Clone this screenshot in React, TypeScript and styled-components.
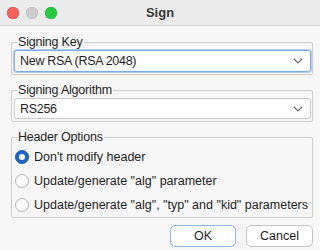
import React from "react";
import styled, { createGlobalStyle } from "styled-components";

const Global = createGlobalStyle`
  html, body { margin: 0; padding: 0; background: #f6f6f6; }
  body { font-family: "Liberation Sans", Arial, sans-serif; }
`;

const Window = styled.div`
  width: 320px;
  height: 250px;
  background: #f7f7f7;
  display: flex;
  flex-direction: column;
  overflow: hidden;
  color: #1d1d1d;
  font-size: 12px;
  letter-spacing: -0.2px;
`;

const TitleBar = styled.div`
  height: 25px;
  flex: none;
  background: #ececec;
  border-bottom: 1px solid #d4d4d4;
  display: grid;
  grid-template-columns: 1fr auto 1fr;
  align-items: center;
  padding: 0 7px;
`;

const Lights = styled.div`
  display: flex;
  gap: 7px;
`;

const Light = styled.span<{ $c: string; $b: string }>`
  width: 12px;
  height: 12px;
  border-radius: 50%;
  background: ${(p) => p.$c};
  box-shadow: inset 0 0 0 0.5px ${(p) => p.$b};
`;

const Title = styled.div`
  font-weight: bold;
  font-size: 13px;
  letter-spacing: 0;
  color: #3a3a3a;
`;

const Body = styled.div`
  display: flex;
  flex-direction: column;
  gap: 7px;
  padding: 8px 7px 0 11px;
`;

const Group = styled.fieldset<{ $pb?: number }>`
  margin: 0;
  padding: 0 1px ${(p) => p.$pb ?? 2}px 2px;
  border: 1px solid #cdcdcd;
  border-radius: 2px;
  min-width: 0;
`;

const Legend = styled.legend`
  padding: 0 1px;
  margin-left: 3px;
  font-size: 12.5px;
  line-height: 16px;
  color: #1d1d1d;
`;

const Select = styled.div<{ $focus?: boolean }>`
  height: ${(p) => (p.$focus ? 22 : 21)}px;
  box-sizing: border-box;
  background: #fff;
  border: 1px solid ${(p) => (p.$focus ? "#7fa9e2" : "#c9c9c9")};
  box-shadow: ${(p) => (p.$focus ? "0 0 0 1px #b3cdf0" : "none")};
  border-radius: 3px;
  display: flex;
  align-items: center;
  justify-content: space-between;
  padding: 0 7px 0 5px;
  font-size: 12.5px;
  letter-spacing: -0.3px;
`;

const Chevron = () => (
  <svg width="10" height="6" viewBox="0 0 10 6">
    <path d="M1 1 L5 5 L9 1" fill="none" stroke="#6b6b6b" strokeWidth="1.2" />
  </svg>
);

const Options = styled.div`
  display: flex;
  flex-direction: column;
  padding-left: 1px;
`;

const Option = styled.label`
  height: 24px;
  display: flex;
  align-items: center;
  gap: 5px;
  font-size: 12.5px;
  letter-spacing: 0;
  white-space: nowrap;
`;

const Radio = styled.span<{ $on?: boolean }>`
  width: 14px;
  height: 14px;
  box-sizing: border-box;
  border-radius: 50%;
  flex: none;
  background: ${(p) => (p.$on ? "#1f63c6" : "#fff")};
  border: 1px solid ${(p) => (p.$on ? "#1a56ad" : "#b4b4b4")};
  display: flex;
  align-items: center;
  justify-content: center;
  &::after {
    content: "";
    display: ${(p) => (p.$on ? "block" : "none")};
    width: 6px;
    height: 6px;
    border-radius: 50%;
    background: #fff;
  }
`;

const Buttons = styled.div`
  display: flex;
  justify-content: flex-end;
  gap: 10px;
`;

const Button = styled.button<{ $primary?: boolean }>`
  height: 22px;
  width: ${(p) => (p.$primary ? 66 : 67)}px;
  background: #fff;
  border: 1px solid ${(p) => (p.$primary ? "#8fb4e6" : "#c4c4c4")};
  border-radius: 5px;
  font-family: inherit;
  font-size: 12.5px;
  letter-spacing: 0;
  color: #1d1d1d;
  padding: 0;
`;

export default function App() {
  return (
    <>
      <Global />
      <Window>
        <TitleBar>
          <Lights>
            <Light $c="#fe5f57" $b="#e0443e" />
            <Light $c="#cdcdcd" $b="#b8b8b8" />
            <Light $c="#28c840" $b="#1aab29" />
          </Lights>
          <Title>Sign</Title>
          <span />
        </TitleBar>
        <Body>
          <Group>
            <Legend>Signing Key</Legend>
            <Select $focus>
              <span>New RSA (RSA 2048)</span>
              <Chevron />
            </Select>
          </Group>
          <Group>
            <Legend>Signing Algorithm</Legend>
            <Select>
              <span>RS256</span>
              <Chevron />
            </Select>
          </Group>
          <Group $pb={0}>
            <Legend>Header Options</Legend>
            <Options>
              <Option>
                <Radio $on />
                Don't modify header
              </Option>
              <Option>
                <Radio />
                Update/generate "alg" parameter
              </Option>
              <Option>
                <Radio />
                Update/generate "alg", "typ" and "kid" parameters
              </Option>
            </Options>
          </Group>
          <Buttons>
            <Button $primary>OK</Button>
            <Button>Cancel</Button>
          </Buttons>
        </Body>
      </Window>
    </>
  );
}
